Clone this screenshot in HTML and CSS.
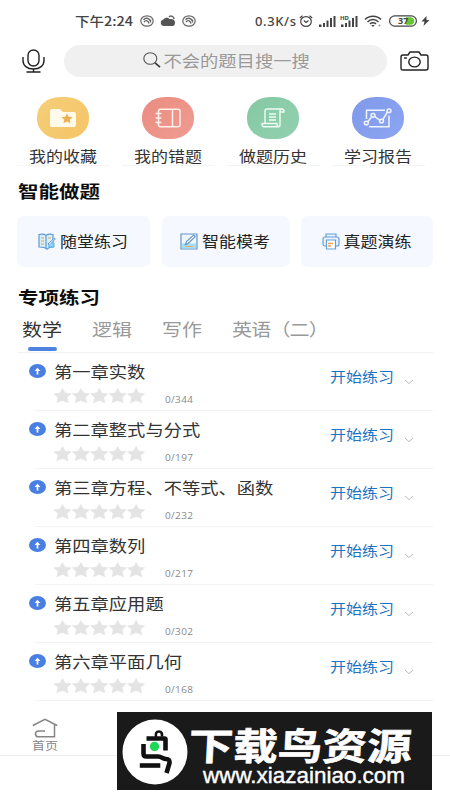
FILE: index.html
```
<!DOCTYPE html>
<html lang="zh-CN">
<head>
<meta charset="utf-8">
<title>智能做题</title>
<link rel="stylesheet" href="styles.css">
</head>
<body>
<svg class="defs" width="0" height="0" aria-hidden="true">
  <symbol id="stars" viewBox="0 0 92 16">
    <g fill="#e4e4e5" stroke="#e4e4e5" stroke-width=".6" stroke-linejoin="round">
      <path id="star" d="M8.500 .5l2.600 4.600 6 .7-4.200 3.700 1.300 5.200-5.700-2.300-5.700 2.300 1.300-5.200L-.1 5.800l6-.7z"/>
      <use href="#star" x="18.4"/><use href="#star" x="36.8"/><use href="#star" x="55.2"/><use href="#star" x="73.6"/>
    </g>
  </symbol>
  <symbol id="up" viewBox="0 0 17 14">
    <ellipse cx="8.5" cy="7" rx="8.5" ry="7" fill="#4a7fe2"/>
    <path d="M8.500 10.500V5" fill="none" stroke="#fff" stroke-width="1.700"/><path d="M5.600 7L8.500 3.800 11.400 7z" fill="#fff"/>
  </symbol>
  <symbol id="down" viewBox="0 0 10 6"><path d="M1 1l4 3.600L9 1" fill="none" stroke="#bbb" stroke-width="1"/></symbol>
  <symbol id="swirl" viewBox="0 0 14 12">
    <ellipse cx="7" cy="6" rx="6.2" ry="5.2" fill="none" stroke="#666" stroke-width="1.2"/>
    <path d="M3.5 5C5 2.500 9 2.500 10.500 6M4 7c1.500-2 4-2 5 1.500M10.500 4.500v3" fill="none" stroke="#666" stroke-width="1.400"/>
  </symbol>
  <symbol id="signal" viewBox="0 0 18 12">
    <path d="M0 12v-2.500h2.500V12zM4 12V8h2v4zM7.500 12V5.500h2V12zM11 12V3h2v9zM14.500 12V1h2v11z" fill="#444"/>
  </symbol>
</svg>

<header class="status">
  <span class="time sq">下午2:24</span>
  <svg class="s-a" width="14" height="12"><use href="#swirl"/></svg>
  <svg class="s-b" width="16" height="12" viewBox="0 0 16 12"><path d="M4 11a3.500 3.300 0 0 1-.5-6.500C4.500 2.500 8 2 9.500 4c3-.5 5.500.5 5.500 3.500S13.500 11 12 11z" fill="#555"/><path d="M9 2c2-2 5-.5 5 2" fill="none" stroke="#666" stroke-width="1.500"/></svg>
  <svg class="s-c" width="14" height="12"><use href="#swirl"/></svg>
  <span class="speed">0.3K/s</span>
  <svg class="s-d" width="14" height="12" viewBox="0 0 14 12"><g fill="none" stroke="#444" stroke-width="1.200"><ellipse cx="7" cy="6.500" rx="5.300" ry="4.900"/><path d="M.8 3L3.500.8M13.200 3L10.500.8M4.800 5.500L7 7.500l2.500-2"/></g></svg>
  <svg class="s-e" width="18" height="12"><use href="#signal"/></svg>
  <svg class="s-f" width="19" height="14" viewBox="0 0 19 14"><use href="#signal" x="1" y="1" width="18" height="12"/><path d="M0 0h10v6H0z" fill="#fff"/><text x="0" y="5.500" class="hd">HD</text></svg>
  <svg class="s-g" width="18" height="12" viewBox="0 0 18 12"><g fill="none" stroke="#444" stroke-width="1.500"><path d="M1 4.500c4-4.500 12-4.500 16 0M3.500 7c3-3.500 8-3.500 11 0M6 9c1.500-1.600 4.500-1.600 6 0"/></g><path d="M7.200 10h3.600L9 12z" fill="#444"/><circle cx="15.500" cy="10.500" r="1" fill="#999"/></svg>
  <svg class="s-h" width="28" height="12" viewBox="0 0 28 12"><rect x=".6" y=".9" width="26.800" height="10.200" rx="5.100" fill="#fff" stroke="#444" stroke-width="1.200"/><path d="M17 2.300h4.500a3.700 3.700 0 0 1 0 7.400H17z" fill="#62c934"/><text x="9" y="9.300" class="bat">37</text></svg>
  <svg class="s-i" width="9" height="12" viewBox="0 0 9 12"><path d="M5.500 1L.5 6.500h3L2.500 11l6-6h-3z" fill="#444"/></svg>
</header>

<div class="searchbar">
  <svg width="23" height="24" viewBox="0 0 23 24"><g fill="none" stroke="#222" stroke-width="1.400"><rect x="6" y="1" width="11" height="16" rx="5.500"/><path d="M1 8v3.500c0 5 4 8.500 10.500 8.500S22 16.500 22 11.500V8M11.500 20v3M4.500 23h14"/></g></svg>
  <div class="field">
    <svg width="18" height="16" viewBox="0 0 18 16"><ellipse cx="7.300" cy="6.500" rx="6.500" ry="5.800" fill="none" stroke="#555" stroke-width="1.100"/><path d="M12 10.800l5 4.400" stroke="#333" stroke-width="1.600"/></svg>
    <span class="sq">不会的题目搜一搜</span>
  </div>
  <svg width="29" height="20" viewBox="0 0 29 20"><g fill="none" stroke="#222" stroke-width="1.400"><path d="M3 4h5l2-3h9l2 3h5q2 0 2 2v11q0 2-2 2H3q-2 0-2-2V6q0-2 2-2z"/><ellipse cx="14.500" cy="11" rx="5.700" ry="4.900"/><path d="M4 7h3"/></g></svg>
</div>

<nav class="shortcuts">
  <a class="shortcut">
    <span class="blob yellow"><svg width="28" height="20" viewBox="0 0 28 20"><path d="M1 3q0-2 2-2h8l3 3h11q2 0 2 2v11q0 2-2 2H3q-2 0-2-2z" fill="#fffaea"/><path d="M18 5.500l1.600 3.200 4 .5-2.900 2.400.8 3.600-3.500-1.700-3.500 1.700.8-3.600-2.900-2.400 4-.5z" fill="#eab04f"/></svg></span>
    <span class="label sq">我的收藏</span>
  </a>
  <a class="shortcut">
    <span class="blob red"><svg width="28" height="20" viewBox="0 0 28 20"><g fill="none" stroke="#fff0ec" stroke-width="1.500"><rect x="4.500" y="1.200" width="21.500" height="17.600" rx="2"/><path d="M18.500 1v18M1.500 5.500h6M1.500 10h6M1.500 14.500h6"/></g></svg></span>
    <span class="label sq">我的错题</span>
  </a>
  <a class="shortcut">
    <span class="blob green"><svg width="26" height="20" viewBox="0 0 26 20"><g fill="none" stroke="#effcf5" stroke-width="1.400"><path d="M5 15.500V3q0-2 2-2h15q2 0 2 3h-4M2 15.500h15q0 3.300 2 3.300H4Q2 18.800 2 15.500zM18.500 18.800q1.500 0 1.500-2V3q0-2 2-2M9 6h7M9 9h7M9 12h7"/></g></svg></span>
    <span class="label sq">做题历史</span>
  </a>
  <a class="shortcut">
    <span class="blob blue"><svg width="30" height="20" viewBox="0 0 30 20"><g fill="none" stroke="#f0f4ff" stroke-width="1.500"><path d="M3.500 11V2.200H22M26 7.500v11.300H6M4.500 14L9 8.500M11.500 8.500l6 4.200M19.500 12l5-8"/><ellipse cx="3.300" cy="15" rx="2" ry="1.800"/><ellipse cx="10" cy="7.300" rx="2" ry="1.800"/><ellipse cx="18.500" cy="13" rx="2" ry="1.800"/><ellipse cx="26" cy="2.700" rx="2" ry="1.800"/></g></svg></span>
    <span class="label sq">学习报告</span>
  </a>
</nav>

<h2 class="sq">智能做题</h2>
<section class="cards">
  <a class="card">
    <svg width="18" height="17" viewBox="0 0 18 17"><g fill="#d9edfb" stroke="#5c9bd6" stroke-width="1.200"><path d="M1 1.500q4-1 7 .8 3-1.800 7-.8V14q-4 0-6 2.200Q7 14 1 14z"/><path d="M8 2.500V15" fill="none"/></g><path d="M3 5h3M3 8h3M3 11h3M10 5h3" stroke="#e6a75c"/><path d="M10 14h6v-4" fill="#7fd6ee" stroke="#5bb7e4"/><path d="M10 11l6.500-6 .8 1L11 12.500z" fill="#fff" stroke="#4f94d4"/></svg>
    <span class="sq">随堂练习</span>
  </a>
  <a class="card">
    <svg width="18" height="17" viewBox="0 0 18 17"><path d="M1 1h16v15H1z" fill="#edf6fd" stroke="#6396ca" stroke-width="1.200"/><path d="M2 10.500h14V15H2z" fill="#a5def3"/><path d="M5.500 11.500l1-3L13.500 2.200l1.700 1.400-7 6.900z" fill="#fff" stroke="#5b8fc6" stroke-width="1.100"/><path d="M6 13.500h7" stroke="#e5ad6e"/></svg>
    <span class="sq">智能模考</span>
  </a>
  <a class="card">
    <svg width="18" height="17" viewBox="0 0 18 17"><g fill="#e8f3fd" stroke="#659fd8" stroke-width="1.200"><path d="M4 4V1h10v3"/><rect x="1" y="4" width="16" height="9" rx="2"/><path d="M4.500 7h9v9h-9z" fill="#fff"/></g><path d="M6 10.500h5M6 13h3" stroke="#eda353" stroke-width="1.300"/></svg>
    <span class="sq">真题演练</span>
  </a>
</section>

<h2 class="sq second">专项练习</h2>
<nav class="tabs">
  <a class="tab active"><span class="sq">数学</span></a>
  <a class="tab"><span class="sq">逻辑</span></a>
  <a class="tab"><span class="sq">写作</span></a>
  <a class="tab"><span class="sq long">英语（二）</span></a>
</nav>

<ul class="chapters">
  <li class="row"><svg class="dot"><use href="#up"/></svg><div class="info"><span class="name sq">第一章实数</span><div class="meta"><svg class="stars"><use href="#stars"/></svg><span class="count">0/344</span></div></div><span class="go sq">开始练习</span><svg class="chev"><use href="#down"/></svg></li>
  <li class="row"><svg class="dot"><use href="#up"/></svg><div class="info"><span class="name sq">第二章整式与分式</span><div class="meta"><svg class="stars"><use href="#stars"/></svg><span class="count">0/197</span></div></div><span class="go sq">开始练习</span><svg class="chev"><use href="#down"/></svg></li>
  <li class="row"><svg class="dot"><use href="#up"/></svg><div class="info"><span class="name sq">第三章方程、不等式、函数</span><div class="meta"><svg class="stars"><use href="#stars"/></svg><span class="count">0/232</span></div></div><span class="go sq">开始练习</span><svg class="chev"><use href="#down"/></svg></li>
  <li class="row"><svg class="dot"><use href="#up"/></svg><div class="info"><span class="name sq">第四章数列</span><div class="meta"><svg class="stars"><use href="#stars"/></svg><span class="count">0/217</span></div></div><span class="go sq">开始练习</span><svg class="chev"><use href="#down"/></svg></li>
  <li class="row"><svg class="dot"><use href="#up"/></svg><div class="info"><span class="name sq">第五章应用题</span><div class="meta"><svg class="stars"><use href="#stars"/></svg><span class="count">0/302</span></div></div><span class="go sq">开始练习</span><svg class="chev"><use href="#down"/></svg></li>
  <li class="row"><svg class="dot"><use href="#up"/></svg><div class="info"><span class="name sq">第六章平面几何</span><div class="meta"><svg class="stars"><use href="#stars"/></svg><span class="count">0/168</span></div></div><span class="go sq">开始练习</span><svg class="chev"><use href="#down"/></svg></li>
</ul>

<footer class="bottom">
  <a class="home">
    <svg width="26" height="20" viewBox="0 0 26 20"><path d="M.8 7.500L13 1.300l12.200 6.200M22.500 7v11.800H6.500q-3 0-3-2.900t3-2.900H13" fill="none" stroke="#858585" stroke-width="1.500"/></svg>
    <span class="sq">首页</span>
  </a>
</footer>

<aside class="banner">
  <svg width="315" height="78" viewBox="0 0 315 78">
    <circle cx="38" cy="40" r="32.500" fill="#fff"/>
    <g fill="none" stroke="#111" stroke-width="4.600">
      <path d="M29.500 26.500H47.500q1 0 1 1V38.500M26.500 32v9.500q0 3 3 3H41c4 0 5 2.500 8 2.500q4 0 3.500 4L49.500 61"/>
      <path d="M22.800 53.500h20.500"/>
      <path d="M39 25q-1-5.500 3-5.500 3.500 0 3 5" stroke-width="2.600"/>
    </g>
    <circle cx="37.500" cy="34.500" r="4.700" fill="#20d657"/>
    <text class="brand" transform="translate(71 48) skewX(-3) scale(1 .84)" textLength="223" lengthAdjust="spacingAndGlyphs">下载鸟资源</text>
    <text class="url" x="86" y="71" textLength="202" lengthAdjust="spacingAndGlyphs">www.xiazainiao.com</text>
  </svg>
</aside>
</body>
</html>
```
FILE: styles.css
```
* { box-sizing: border-box; }
body {
  position: relative;
  margin: 0;
  width: 450px;
  height: 800px;
  overflow: hidden;
  background: #fff;
  color: #333;
  font-family: "Noto Sans", "Noto Sans CJK SC", sans-serif;
}
svg { display: block; flex: none; }
.defs { position: absolute; }

/* Wide, slightly flattened lettering */
.sq {
  display: block;
  font-family: "Noto Sans CJK SC", sans-serif;
  transform: scaleY(.87);
  white-space: nowrap;
}

.status {
  display: flex;
  align-items: center;
  height: 42px;
  padding-left: 75px;
}
.time { width: 59px; font-size: 14.5px; font-weight: 500; line-height: 20px; color: #444; }
.s-a { margin-left: 6px; }
.s-b { margin-left: 6px; }
.s-c { margin-left: 6px; }
.speed { width: 42px; margin-left: 59px; font-size: 13px; font-weight: 500; line-height: 20px; color: #444; letter-spacing: .6px; white-space: nowrap; transform: scaleY(.92); }
.s-d { margin-left: 2px; }
.s-e { margin-left: 6px; }
.s-f { margin-left: 3px; }
.s-g { margin-left: 5px; }
.s-h { margin-left: 7px; }
.s-i { margin-left: 4px; }
.hd { font: bold 6px "Noto Sans", sans-serif; fill: #444; }
.bat { font: bold 9px "Noto Sans", sans-serif; fill: #444; }

.searchbar {
  display: flex;
  align-items: center;
  justify-content: space-between;
  height: 32px;
  margin-top: 3px;
  padding: 0 21px 0 22px;
}
.field {
  display: flex;
  align-items: center;
  gap: 3px;
  width: 323px;
  height: 32px;
  margin-left: 5px;
  padding: 0 0 2px 79px;
  border-radius: 16px;
  background: #f0f0f0;
  color: #999;
  font-size: 18.300px;
  line-height: 28px;
}

.shortcuts {
  display: flex;
  gap: 12px;
  margin: 20px 0 0 17px;
}
.shortcut {
  display: flex;
  flex-direction: column;
  align-items: center;
  width: 93px;
  height: 69px;
  border-bottom: 1px solid #f4f4f4;
}
.blob {
  display: flex;
  flex: none;
  align-items: center;
  justify-content: center;
  width: 52px;
  height: 42px;
  margin-right: 1px;
  border-radius: 23px / 20px;
}
.yellow { background: linear-gradient(135deg, #f4cf78, #f6c467); }
.red { background: linear-gradient(135deg, #ea8c81, #f09c91); }
.green { background: linear-gradient(135deg, #85c8a3, #93d1b0); }
.blue { background: linear-gradient(135deg, #8099e8, #8ba5f3); }
.label { flex: none; margin: 5px 1px 0 0; font-size: 17px; line-height: 24px; }

h2 {
  margin: 11px 0 0 18px;
  font-size: 20.500px;
  line-height: 28px;
  font-weight: 700;
  color: #0c0c0c;
}
h2.sq { transform: scaleY(.82); }
h2.second { margin-top: 16px; }

.cards {
  display: grid;
  grid-template-columns: 133px 128px 132px;
  gap: 11.500px;
  margin: 10.500px 0 0 17px;
}
.card {
  display: flex;
  align-items: center;
  justify-content: center;
  gap: 4px;
  height: 51px;
  padding-right: 1px;
  border-radius: 7px;
  background: #f5f8fe;
  color: #222;
  font-size: 17px;
  line-height: 24px;
}

.tabs {
  display: flex;
  gap: 30px;
  height: 42px;
  margin: 0 17px;
  padding: 3px 0 0 5px;
  border-bottom: 1px solid #f1f1f1;
  font-size: 20px;
  line-height: 29px;
  color: #999;
}
.tab { height: 37px; }
.long { letter-spacing: -.8px; }
.active { color: #333; }
.active::after {
  content: "";
  display: block;
  width: 29px;
  height: 4px;
  margin: 4px 0 0 6px;
  border-radius: 2px;
  background: #5083dd;
}

.chapters { margin: 0; padding: 0; list-style: none; }
.row {
  display: flex;
  align-items: flex-start;
  height: 58px;
  margin: 0 17px 0 35px;
  border-bottom: 1px solid #f3f3f3;
}
.dot { width: 17px; height: 14px; margin: 11px 0 0 -6px; }
.info { width: 276px; margin: 5px 0 0 8px; }
.name { font-size: 18.300px; line-height: 26px; }
.meta { display: flex; margin-top: 4px; }
.stars { width: 92px; height: 16px; }
.count { margin: 4px 0 0 19px; font-family: "Open Sans", "Noto Sans", sans-serif; font-size: 10px; line-height: 14px; color: #888; letter-spacing: .35px; transform: scaleY(.93); }
.go { margin-top: 11px; font-size: 16px; line-height: 24px; color: #1e74c2; }
.chev { width: 10px; height: 6px; margin: 26px 0 0 10px; }

.bottom { height: 55px; border-bottom: 1px solid #eee; }
.home {
  display: flex;
  flex-direction: column;
  align-items: center;
  width: 26px;
  margin-left: 32px;
  padding-top: 17px;
  font-size: 13px;
  line-height: 16px;
  color: #888;
}

.banner {
  position: absolute;
  left: 117px;
  top: 712px;
  width: 315px;
  height: 78px;
  background: #1a1a1a;
}
.brand { font: 700 44.600px "Noto Sans CJK SC", sans-serif; fill: #fff; stroke: #fff; stroke-width: .8px; }
.url { font: 22.300px "Liberation Sans", sans-serif; fill: #fff; stroke: #fff; stroke-width: .4px; }
```
